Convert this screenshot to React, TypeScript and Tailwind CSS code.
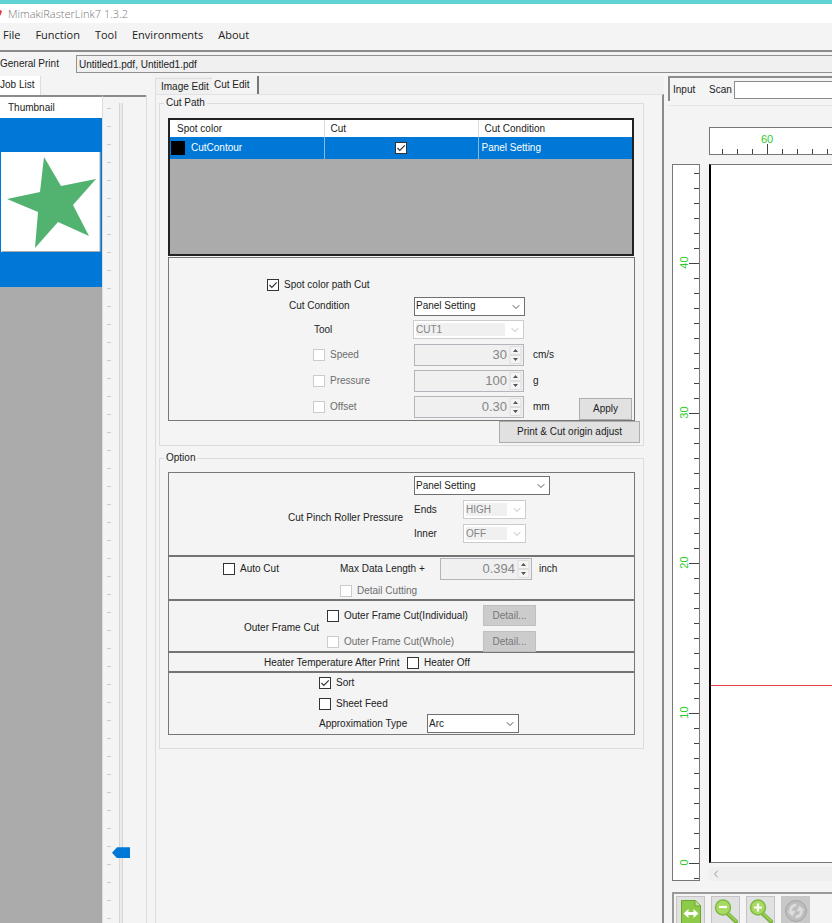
import { useId, type ReactNode } from "react";
import { ChevronDown, ChevronLeft } from "lucide-react";

function Check({
  label,
  checked = false,
  disabled = false,
  hideLabel = false,
  className = "",
}: {
  label: string;
  checked?: boolean;
  disabled?: boolean;
  hideLabel?: boolean;
  className?: string;
}) {
  return (
    <label className={`flex items-center gap-[5px] whitespace-nowrap ${disabled ? "text-[#6d6d6d]" : ""} ${className}`}>
      <span className="relative block size-3 shrink-0">
        <input
          type="checkbox"
          defaultChecked={checked}
          disabled={disabled}
          aria-label={hideLabel ? label : undefined}
          className="peer block size-3 appearance-none border border-[#333] bg-white disabled:border-[#ccc]"
        />
        <svg
          viewBox="0 0 12 12"
          className="pointer-events-none absolute inset-0 hidden size-3 fill-none stroke-[#333] peer-checked:block"
        >
          <path d="M2.5 6l2.3 2.4L9.8 3.3" strokeWidth="1.2" />
        </svg>
      </span>
      {!hideLabel && <span>{label}</span>}
    </label>
  );
}

function Drop({
  id,
  label,
  value,
  disabled = false,
  className,
}: {
  id?: string;
  label?: string;
  value: string;
  disabled?: boolean;
  className: string;
}) {
  return (
    <span
      className={`relative flex h-[19px] shrink-0 border bg-white ${disabled ? "border-[#ccc] p-[2px]" : "border-[#707070]"} ${className}`}
    >
      <select
        id={id}
        aria-label={label}
        disabled={disabled}
        defaultValue={value}
        className="h-full w-full appearance-none pl-px disabled:mr-4 disabled:bg-[#f0f0f0] disabled:pl-0 disabled:text-[#838383] disabled:opacity-100"
      >
        <option>{value}</option>
      </select>
      <ChevronDown
        strokeWidth={2}
        className={`pointer-events-none absolute top-[3px] right-[2px] size-3 ${disabled ? "text-[#bbb]" : "text-[#555]"}`}
      />
    </span>
  );
}

function Spin({ label, value, className }: { label: string; value: string; className: string }) {
  return (
    <span className={`flex h-[22px] shrink-0 border border-[#b4b4bc] bg-[#f0f0f0] ${className}`}>
      <input
        type="text"
        aria-label={label}
        defaultValue={value}
        disabled
        className="w-full min-w-0 pr-[2px] text-right font-['Liberation_Sans',sans-serif] text-[13px] text-[#858585]"
      />
      <svg viewBox="0 0 14 20" className="h-5 w-[14px] shrink-0">
        <path d="M1 1.500h11v8H1zM1 10.500h11v8H1z" fill="#f4f4f4" stroke="#dedede" />
        <path d="M4 7l2.500-3 2.500 3zM4 13l2.500 3 2.500-3z" fill="#555" />
      </svg>
    </span>
  );
}

function Group({ title, className, children }: { title: string; className: string; children: ReactNode }) {
  return (
    <fieldset className={`ml-[3px] mr-[18px] min-w-0 border border-[#dcdcdc] pl-2 ${className}`}>
      <legend className="-ml-1 px-[2px] leading-3">{title}</legend>
      {children}
    </fieldset>
  );
}

const button = "flex h-[22px] shrink-0 items-center justify-center border border-[#adadad] bg-[#e1e1e1] whitespace-nowrap";
const detail = "flex h-[21px] w-[53px] shrink-0 items-center justify-center border border-[#bfbfbf] bg-[#ccc] text-[#777]";
const tool = "flex size-[29px] shrink-0 items-center justify-center border border-[#c4c4c4] bg-[#e1e1e1]";

function Header() {
  return (
    <header className="shrink-0">
      <div className="h-1 bg-[#5fd3d3]" />
      <div className="flex h-[19px] items-center bg-white font-['Open_Sans',sans-serif] text-[11px] font-light text-[#777]">
        <svg viewBox="0 0 8 12" className="h-3 w-2 shrink-0">
          <path d="M0 2l2 1-1 3-1 2z" fill="#e0333c" />
        </svg>
        MimakiRasterLink7 1.3.2
      </div>
      <nav className="flex h-[29px] items-start gap-[15px] border-b-2 border-[#8b8b8b] bg-[#f4f4f4] pt-1 pl-[3px] font-['Open_Sans',sans-serif] text-[11px] leading-4 text-[#222]">
        {["File", "Function", "Tool", "Environments", "About"].map((m) => (
          <button key={m} type="button">
            {m}
          </button>
        ))}
      </nav>
      <div className="flex h-6 items-center">
        <label htmlFor="jobs" className="w-[76px] shrink-0 whitespace-nowrap">
          General Print
        </label>
        <input
          id="jobs"
          readOnly
          defaultValue="Untitled1.pdf, Untitled1.pdf"
          className="h-[18px] min-w-0 flex-1 border border-r-0 border-[#909090] bg-[#f0f0f0] pl-[2px]"
        />
      </div>
    </header>
  );
}

function JobList() {
  return (
    <section className="flex w-[155px] shrink-0 flex-col">
      <div className="flex h-[19px] items-end">
        <button type="button" className="h-full w-[41px] border-r border-[#ddd] bg-white pb-px text-left whitespace-nowrap">
          Job List
        </button>
      </div>
      <div className="flex min-h-0 w-[147px] flex-1 border-r border-[#dcdcdc]">
        <div className="flex w-[103px] flex-col border-t-2 border-r border-t-[#8b8b8b] border-r-[#ddd] bg-[#ababab]">
          <div className="h-[21px] shrink-0 bg-white pl-2 leading-[21px]">Thumbnail</div>
          <div className="shrink-0 bg-[#0078d7] py-[34px]">
            <svg viewBox="0 0 102 101" className="block h-[101px] w-full">
              <path d="M1 0h99v100H1z" fill="#fff" />
              <path d="M2 99.500h98V0" fill="none" stroke="#aaa" />
              <path
                d="M44 5l17 29 35-7-23 26 16 31-31-14-23 26 3-36-31-13 33-7z"
                fill="#52b371"
              />
            </svg>
          </div>
        </div>
        <div className="flex flex-1 border-t-2 border-[#8b8b8b]">
          <svg className="h-full w-[9px] shrink-0">
            {Array.from({ length: 60 }, (_, i) => (
              <path key={i} d={`M4 ${11.5 + i * 18}h4`} stroke="#ccc" />
            ))}
          </svg>
          <div className="h-full pt-[6px]">
            <input
              type="range"
              aria-label="Thumbnail size"
              max={1000}
              defaultValue={920}
              className="block h-full w-[18px] appearance-none bg-[linear-gradient(90deg,transparent_7px,#d6d6d6_7px,#d6d6d6_8px,#eaeaea_8px,#eaeaea_10px,#d6d6d6_10px,#d6d6d6_11px,transparent_11px)] [writing-mode:vertical-lr] [&::-webkit-slider-thumb]:h-[11px] [&::-webkit-slider-thumb]:w-[18px] [&::-webkit-slider-thumb]:appearance-none [&::-webkit-slider-thumb]:bg-[#0078d7] [&::-webkit-slider-thumb]:[clip-path:polygon(0_50%,5px_0,100%_0,100%_100%,5px_100%)]"
            />
          </div>
        </div>
      </div>
    </section>
  );
}

function CutPath() {
  const cond = useId();
  const cutTool = useId();
  return (
    <Group title="Cut Path" className="mt-[2px] h-[349px]">
      <div className="mt-[9px] h-[138px] w-[466px] border-2 border-[#222] bg-[#ababab]">
        <table className="w-full table-fixed border-collapse text-left">
          <thead>
            <tr className="h-[17px] bg-white">
              <th className="border-r border-[#ddd] pl-[7px] font-normal">Spot color</th>
              <th className="border-r border-[#ddd] pl-[6px] font-normal">Cut</th>
              <th className="pl-[6px] font-normal">Cut Condition</th>
            </tr>
          </thead>
          <tbody>
            <tr className="h-[22px] bg-[#0078d7] text-white">
              <td className="border-r border-[#8ab8dc]">
                <div className="flex items-center gap-[6px] pl-px">
                  <span className="size-[14px] bg-black" />
                  CutContour
                </div>
              </td>
              <td className="border-r border-[#8ab8dc]">
                <Check label="Cut CutContour" hideLabel checked className="justify-center" />
              </td>
              <td className="pl-[3px]">Panel Setting</td>
            </tr>
          </tbody>
        </table>
      </div>
      <div className="mt-px h-[164px] w-[467px] border border-[#777] pt-[17px]">
        <Check label="Spot color path Cut" checked className="h-5 pl-[98px]" />
        <div className="flex h-[22px] items-center">
          <label htmlFor={cond} className="w-[245px] pl-[120px]">
            Cut Condition
          </label>
          <Drop id={cond} value="Panel Setting" className="w-[111px]" />
        </div>
        <div className="flex h-[25px] items-center">
          <label htmlFor={cutTool} className="w-[244px] pl-[145px]">
            Tool
          </label>
          <Drop id={cutTool} value="CUT1" disabled className="w-[111px]" />
        </div>
        {[
          ["Speed", "30", "cm/s"],
          ["Pressure", "100", "g"],
          ["Offset", "0.30", "mm"],
        ].map(([name, value, unit]) => (
          <div key={name} className="flex h-[26px] items-center">
            <Check label={name} disabled className="w-[245px] pl-36" />
            <Spin label={name} value={value} className="w-[110px]" />
            <span className="pl-[9px]">{unit}</span>
            {name === "Offset" && (
              <button type="button" className={`${button} mr-[2px] ml-auto w-[53px] self-end`}>
                Apply
              </button>
            )}
          </div>
        ))}
      </div>
      <button type="button" className={`${button} ml-auto mr-[3px] w-[141px]`}>
        Print &amp; Cut origin adjust
      </button>
    </Group>
  );
}

function Options() {
  const ends = useId();
  const inner = useId();
  const approx = useId();
  return (
    <Group title="Option" className="mt-[6px] h-[297px]">
      <div className="mt-2 w-[467px] divide-y-2 divide-[#747474] border border-[#777]">
        <div className="flex h-[84px] pt-[3px]">
          <span className="w-[245px] pt-[35px] pl-[119px] whitespace-nowrap">Cut Pinch Roller Pressure</span>
          <div>
            <Drop label="Cut Pinch Roller Pressure" value="Panel Setting" className="w-[136px]" />
            <div className="flex h-6 items-end">
              <label htmlFor={ends} className="w-[49px] pb-[2px]">
                Ends
              </label>
              <Drop id={ends} value="HIGH" disabled className="w-[63px]" />
            </div>
            <div className="flex h-6 items-end">
              <label htmlFor={inner} className="w-[49px] pb-[2px]">
                Inner
              </label>
              <Drop id={inner} value="OFF" disabled className="w-[63px]" />
            </div>
          </div>
        </div>
        <div className="h-11">
          <div className="flex h-6 items-center">
            <Check label="Auto Cut" className="w-[171px] pl-[54px]" />
            <span className="w-[100px] whitespace-nowrap">Max Data Length +</span>
            <Spin label="Max Data Length" value="0.394" className="w-[92px]" />
            <span className="pl-[7px]">inch</span>
          </div>
          <Check label="Detail Cutting" disabled className="h-5 pl-[171px]" />
        </div>
        <div className="flex h-[52px]">
          <span className="w-[158px] pt-5 pl-[75px] whitespace-nowrap">Outer Frame Cut</span>
          <div className="pt-1">
            <div className="flex h-[26px] items-start">
              <Check label="Outer Frame Cut(Individual)" className="h-[22px] w-[156px]" />
              <button type="button" disabled className={detail}>
                Detail...
              </button>
            </div>
            <div className="flex items-start">
              <Check label="Outer Frame Cut(Whole)" disabled className="h-[22px] w-[156px]" />
              <button type="button" disabled className={detail}>
                Detail...
              </button>
            </div>
          </div>
        </div>
        <div className="flex h-5 items-center pt-[2px]">
          <span className="w-[238px] pl-[95px] whitespace-nowrap">Heater Temperature After Print</span>
          <Check label="Heater Off" />
        </div>
        <div className="h-[61px] pl-[150px]">
          <Check label="Sort" checked className="h-5" />
          <Check label="Sheet Feed" className="h-[21px]" />
          <div className="flex h-[19px] items-center">
            <label htmlFor={approx} className="w-[108px] whitespace-nowrap">
              Approximation Type
            </label>
            <Drop id={approx} value="Arc" className="w-[92px]" />
          </div>
        </div>
      </div>
    </Group>
  );
}

function VerticalRuler() {
  return (
    <svg className="block h-full w-7 border border-[#777] bg-white">
      {Array.from({ length: 48 }, (_, i) => {
        const n = 46 - i;
        const y = Math.round(697.5 - n * 15) + 0.5;
        const major = n % 10 === 0;
        return (
          <g key={n}>
            <path d={`M${major ? 16 : 21} ${y}h12`} stroke="#444" />
            {major && n >= 0 && (
              <text
                transform={`translate(15 ${y - 1}) rotate(-90)`}
                textAnchor="middle"
                className="fill-[#2ecc2e] font-['Liberation_Sans',sans-serif] text-[11px]"
              >
                {n}
              </text>
            )}
          </g>
        );
      })}
    </svg>
  );
}

function HorizontalRuler() {
  return (
    <svg className="block h-7 w-full border border-r-0 border-[#777] bg-white">
      {Array.from({ length: 60 }, (_, i) => (
        <path key={i} d={`M${12.5 + i * 15} ${i % 10 === 3 ? 16 : 21}v10`} stroke="#444" />
      ))}
      <text x="57" y="15" textAnchor="middle" className="fill-[#2ecc2e] font-['Liberation_Sans',sans-serif] text-[11px]">
        60
      </text>
    </svg>
  );
}

function Lens({ plus = false }: { plus?: boolean }) {
  return (
    <svg viewBox="0 0 26 26" className="size-[26px]">
      <path d="M15 16l8 7.500" stroke="#6fae35" strokeWidth="4" strokeLinecap="round" />
      <path d="M15.500 16l7.500 7" stroke="#9bd052" strokeWidth="2" strokeLinecap="round" />
      <circle cx="10" cy="9.500" r="7.500" fill="#a9d961" stroke="#7dba45" strokeWidth="1.500" />
      <path d={plus ? "M6 9.500h8M10 5.500v8" : "M6 9h8"} stroke="#fff" strokeWidth="2.200" />
    </svg>
  );
}

function Preview() {
  return (
    <section className="flex min-w-0 flex-1 flex-col pl-1">
      <div className="flex h-[25px] items-center border-t-2 border-l-2 border-[#8b8b8b] pl-[3px]">
        <span className="w-9 shrink-0">Input</span>
        <label htmlFor="scan" className="w-[25px] shrink-0">
          Scan
        </label>
        <input id="scan" className="h-[18px] min-w-0 flex-1 border border-r-0 border-[#8b8b8b] bg-white" />
      </div>
      <div className="mt-1 h-[22px] border-t border-[#e6e6e6]" />
      <div className="pl-[41px]">
        <HorizontalRuler />
      </div>
      <div className="mt-[9px] flex min-h-0 flex-1 gap-[9px] pl-1">
        <VerticalRuler />
        <div className="flex min-w-0 flex-1 flex-col">
          <div className="min-h-0 flex-1 border-y border-l-2 border-y-[#777] border-l-black bg-white pt-[520px]">
            <div className="h-px bg-[#e8404a]" />
          </div>
          <div className="mt-1 flex h-[14px] shrink-0 items-center bg-[#efefef]">
            <button type="button" aria-label="Scroll left" className="pl-px text-[#999]">
              <ChevronLeft className="size-3" />
            </button>
          </div>
        </div>
      </div>
      <div className="mt-[11px] ml-1 flex h-[31px] shrink-0 gap-[6px] overflow-hidden border-t-2 border-l-2 border-[#9a9a9a] pt-[2px] pl-[2px]">
        <button type="button" aria-label="Fit width" className={tool}>
          <svg viewBox="0 0 22 26" className="h-[26px] w-[22px]">
            <path d="M1.500 2.500h14l5 5v18h-19z" fill="#8cca48" stroke="#6da52f" />
            <path d="M15 2.500v5.500h5.500" fill="#c7e59b" stroke="#6da52f" />
            <path d="M3.500 15.500l5-4.500v3h5v-3l5 4.500-5 4.500v-3h-5v3z" fill="#fff" />
          </svg>
        </button>
        <button type="button" aria-label="Zoom out" className={tool}>
          <Lens />
        </button>
        <button type="button" aria-label="Zoom in" className={tool}>
          <Lens plus />
        </button>
        <button
          type="button"
          aria-label="Refresh"
          disabled
          className="flex size-[29px] shrink-0 items-center justify-center bg-[#c8c8c8]"
        >
          <svg viewBox="0 0 24 24" className="size-6">
            <circle cx="12" cy="12" r="10.500" fill="#bdbdbd" stroke="#a6a6a6" />
            <g fill="none" stroke="#dcdcdc" strokeWidth="3">
              <path d="M12.500 6C8.500 6 6 9 6.800 12.500" />
              <path d="M11.500 18c4 0 6.500-3 5.700-6.500" />
            </g>
            <path d="M3.500 12.500l8-1-3 6zM20.500 11.500l-8 1 3-6z" fill="#dcdcdc" />
          </svg>
        </button>
      </div>
    </section>
  );
}

export default function App() {
  return (
    <div className="flex h-screen flex-col overflow-hidden bg-[#f4f4f4] font-['Liberation_Sans',Arial,sans-serif] text-[10px] leading-[14px] text-[#222]">
      <Header />
      <main className="flex min-h-0 flex-1">
        <JobList />
        <section className="flex w-[509px] shrink-0 flex-col">
          <div className="flex h-[18px] items-end bg-[#f0f0f0]">
            <button type="button" className="h-4 w-[57px] border-t border-l border-[#ddd] pl-[5px] text-left whitespace-nowrap">
              Image Edit
            </button>
            <button type="button" className="h-[18px] w-[47px] border-r-2 border-[#777] bg-[#f4f4f4] pb-px pl-[2px] text-left">
              Cut Edit
            </button>
          </div>
          <div className="min-h-0 flex-1 border-t border-r-2 border-l border-t-[#e2e2e2] border-r-[#8b8b8b] border-l-[#dcdcdc]">
            <CutPath />
            <Options />
          </div>
        </section>
        <Preview />
      </main>
    </div>
  );
}
